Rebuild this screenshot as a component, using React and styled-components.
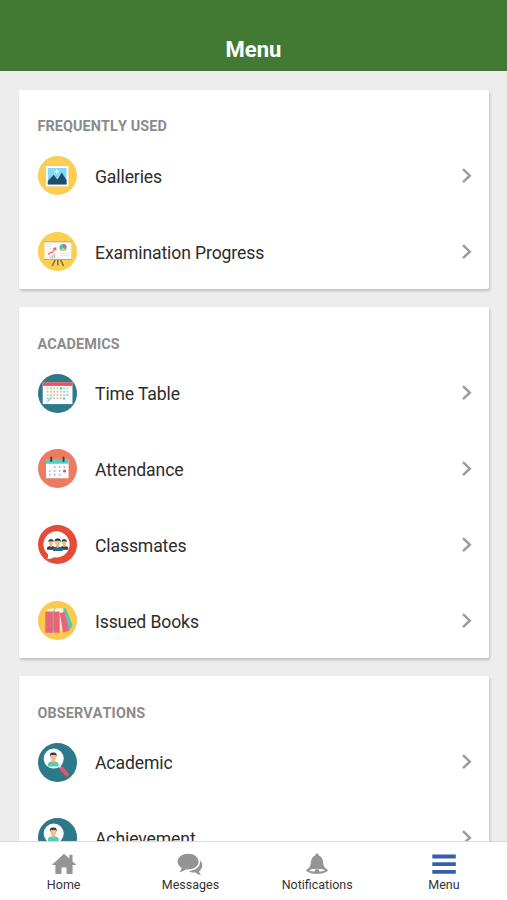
import React from "react";
import styled, { createGlobalStyle } from "styled-components";

const GlobalStyle = createGlobalStyle`
  * { box-sizing: border-box; }
  body { margin: 0; background: #ededed; font-family: Roboto, "Liberation Sans", sans-serif; }
`;

const Screen = styled.div`
  display: flex;
  flex-direction: column;
  height: 900px;
  overflow: hidden;
  background: #ededed;
`;

const Header = styled.header`
  flex: none;
  height: 71.4px;
  padding-top: 37px;
  background: #427a34;
  color: #fff;
  font-size: 22px;
  line-height: 26px;
  font-weight: 700;
  text-align: center;
`;

const Content = styled.main`
  flex: 1;
  min-height: 0;
  overflow: hidden;
  display: flex;
  flex-direction: column;
  gap: 17.8px;
  padding: 18.5px 18.5px 0 19px;
`;

const Card = styled.section`
  flex: none;
  background: #fff;
  border-radius: 2px;
  box-shadow: 1px 2px 3px rgba(0, 0, 0, 0.2);
`;

const CardTitle = styled.h2`
  margin: 0;
  height: 48px;
  padding: 28.6px 18.5px 0;
  font-size: 14.4px;
  line-height: 17px;
  font-weight: 700;
  font-kerning: none;
  letter-spacing: 0.1px;
  color: #8b8b8b;
`;

const Row = styled.div`
  display: flex;
  align-items: center;
  height: 75.8px;
  padding: 0 15px 0 18.5px;
`;

const RowIcon = styled.svg`
  flex: none;
  width: 39px;
  height: 39px;
  margin-right: 18.5px;
`;

const RowLabel = styled.span`
  flex: 1;
  padding-top: 2px;
  font-size: 17.6px;
  letter-spacing: -0.12px;
  line-height: 22px;
  color: #2c2c2c;
`;

const Arrow = styled.svg`
  width: 14px;
  height: 18px;
  fill: none;
  stroke: #9c9c9c;
  stroke-width: 2.5;
`;

const TabBar = styled.nav`
  flex: none;
  display: grid;
  grid-template-columns: repeat(4, 1fr);
  height: 59px;
  border-top: 1px solid #d9d9d9;
  background: #fff;
`;

const Tab = styled.div`
  display: flex;
  flex-direction: column;
  align-items: center;
  padding: 10px 0 0 0.6px;
  font-size: 12.5px;
  line-height: 16px;
  color: #333;
`;

const TabIcon = styled.svg`
  width: 28px;
  height: 24px;
  margin-bottom: 1px;
  fill: ${(p) => (p.$active ? "#3460ab" : "#949494")};
`;

const Person = ({ x, y, s = 1, shirt = "#26435b", hair = "#24313b" }) => (
  <g transform={`translate(${x} ${y}) scale(${s})`}>
    <path d="M-4.8 8.5V6.3Q-4.5 3.8 0 3.8T4.8 6.3V8.5Z" fill={shirt} />
    <path d="M-1.4 1.5h2.8v3L0 5.5-1.4 4.5Z" fill="#efad78" />
    <ellipse cx="0" cy="0" rx="2.6" ry="3.3" fill="#f7bf87" />
    <path d="M-2.9-.3Q-3.8-4.4 0-4.2 3.8-4.4 2.9-.3L2.1-1.9H-2.1Z" fill={hair} />
  </g>
);

const Galleries = () => (
  <>
    <circle cx="19.5" cy="19.5" r="19.5" fill="#fbcd55" />
    <path d="M8 10h22.4v20.4H8Z" fill="#fff" />
    <path d="M9.8 11.9h18.8v16.5H9.8Z" fill="#83d9f8" />
    <path d="M9.8 28.4v-3.3l6-6.3 2.8 4 1.2.4 4-6.6 4.8 7.7v4.1Z" fill="#244b6b" />
    <path d="M18.7 13.3v4.4M16.5 15.5h4.4" stroke="#e7fbff" strokeWidth="1.3" />
  </>
);

const Examination = () => (
  <>
    <circle cx="19.5" cy="19.5" r="19.5" fill="#fcd04e" />
    <path d="M17.3 27.5l-3.1 6.5M19.8 27.5v5.8M22.5 27.5l3 6.5" stroke="#80704b" strokeWidth="1.6" />
    <path d="M6.5 9.8h26.7v17.7H6.5Z" fill="#f8f9fb" />
    <path d="M5.8 9.8h28M5.8 27.5h28" stroke="#a79c78" strokeWidth=".8" />
    <path d="M10 22.5l2.8-2 1.3.2 3.4-4.6m-2.3.5 2.5-.7.2 2.5" fill="none" stroke="#e66c70" strokeWidth="1.2" />
    <path d="M12.2 26.3v-1.8M16.4 26.3v-5" stroke="#f0b4a7" strokeWidth="1.5" />
    <path d="M14.3 26.3v-3.3" stroke="#8ed6c5" strokeWidth="1.5" />
    <circle cx="25" cy="15.5" r="3.5" fill="#4ebfb1" />
    <path d="M25 15.5V12a3.5 3.5 0 0 1 3.5 3.5Z" fill="#e85e63" />
    <path d="M25 15.5l2.4 2.5a3.5 3.5 0 0 1-4.6.2Z" fill="#f0ce62" />
    <path d="M9 12.5h5M9 14.5h3M22.5 21.5h7.5M22.5 23.5h7.5" stroke="#dadde1" strokeWidth=".6" />
  </>
);

const CALENDAR_COLORS = ["#edc46f", "#b9c8d0", "#dcc3c3", "#b3c4cd", "#74d1c4", "#c0c0d0", "#ecc25f", "#9dd2c6"];

const TimeTable = () => (
  <>
    <circle cx="19.5" cy="19.5" r="19.5" fill="#2d7889" />
    <path d="M4.7 8.3h29.8v21.8H4.7Z" fill="#fafcfb" />
    <path d="M4.7 8.3h29.8v3.6H4.7Z" fill="#e85261" />
    {Array.from({ length: 26 }, (_, i) => (
      <path
        key={i}
        d={`M${8.7 + (i % 7) * 3.3} ${13.5 + Math.floor(i / 7) * 3.3}h1.8v1.8h-1.8Z`}
        fill={CALENDAR_COLORS[(i * 3) % 8]}
      />
    ))}
    <path d="M8.7 27.5l4-5 1.2 1-3.5 4.5Z" fill="#afcfc3" />
    <path d="M21.9 13.4h2.2v2.2h-2.2ZM25 23.4h2.2v2.2H25Z" fill="#52c6b8" />
  </>
);

const Attendance = () => (
  <>
    <circle cx="19.5" cy="19.5" r="19.5" fill="#ec7b61" />
    <path d="M8 11Q8 10 9 10H29.6Q30.6 10 30.6 11V29.3H8Z" fill="#fafcff" />
    <path d="M8 14.8V11Q8 10 9 10H29.6Q30.6 10 30.6 11V14.8Z" fill="#57cebb" />
    <path d="M13.2 8.5v3.5M25.5 8.5v3.5" stroke="#414858" strokeWidth="2" strokeLinecap="round" />
    {Array.from({ length: 10 }, (_, n) => {
      const i = n + 1;
      return (
        <circle key={i} cx={11.8 + (i % 4) * 4.9} cy={18 + Math.floor(i / 4) * 3.9} r="1" fill="#b7b9c6" />
      );
    })}
    <circle cx="26.5" cy="21.9" r="1.5" fill="#e64f48" />
  </>
);

const Classmates = () => (
  <>
    <circle cx="19.5" cy="19.5" r="19.5" fill="#e64b38" />
    <path d="M9.2 34Q10.6 32 9.9 29.2A13.1 13.1 0 1 1 16.5 32.3Q13.5 34.2 9.2 34Z" fill="#fff" />
    <Person x={13} y={17.8} s={0.82} />
    <Person x={26.2} y={17.8} s={0.82} />
    <Person x={19.7} y={17.6} s={1} shirt="#246b8f" />
  </>
);

const Books = () => (
  <>
    <circle cx="19.5" cy="19.5" r="19.5" fill="#fbc94b" />
    <path d="M10.5 7.7h6.7l-2.7 3.1H7.3Z" fill="#f6f2e9" />
    <path d="M17.2 8v20.5l-3 3.3V11Z" fill="#53c9bc" />
    <path d="M7.3 10.5h7.4v21.3H7.3Z" fill="#e96577" />
    <path d="M18.3 7.2h6.1l-2 4.1h-6.9Z" fill="#faf8ec" />
    <path d="M21.2 10.7l3.2-3.5 3.2 18-5 5.5Z" fill="#faf8ec" />
    <path d="M15.8 10.5h5.8v21.3h-5.8Z" fill="#e96577" />
    <path d="M25.5 7.5l2.2-.4 6.9 17.5-3.9 5.4Z" fill="#54c8bd" />
    <path d="M21.7 12l4.9-1.1 4.7 18.9-6.4 1.6Z" fill="#e96577" />
    <path d="M7.6 14.5h6.7M7.6 28.4h6.7M16.1 14.5h5.1M16.1 28.4h5.1" stroke="#df6674" strokeWidth=".6" />
  </>
);

const Academic = () => (
  <>
    <circle cx="19.5" cy="19.5" r="19.5" fill="#2d7889" />
    <path d="M21.5 23.5l2 2" stroke="#d8e5e9" strokeWidth="2" />
    <path d="M23.7 25.7l5.2 5.7" stroke="#ea5363" strokeWidth="4" strokeLinecap="round" />
    <circle cx="15.7" cy="15.6" r="10" fill="#fff" />
    <Person x={15.3} y={14.1} s={1.12} shirt="#51cbb9" hair="#473b36" />
  </>
);

const SECTIONS = [
  ["FREQUENTLY USED", [["Galleries", Galleries], ["Examination Progress", Examination]]],
  ["ACADEMICS", [["Time Table", TimeTable], ["Attendance", Attendance], ["Classmates", Classmates], ["Issued Books", Books]]],
  ["OBSERVATIONS", [["Academic", Academic], ["Achievement", Academic]]],
];

const TABS = [
  ["Home", <path d="M14 1.7 1.8 13.1h3.6V22h6.1v-6.5h5V22h6.1v-8.9h3.8L22.5 9.5V2.7h-3.2v3.9Z" />],
  ["Messages", (
    <>
      <path d="M12.2 1.7C6.2 1.7 1.6 5 1.6 9.6c0 2.7 1.6 5 4 6.3-.3 1.7-1.2 3-2.4 3.8 2.6 0 4.7-.9 6.4-2.3 7.4.9 13-2.7 13-7.8 0-4.6-4.6-7.9-10.4-7.9Z" />
      <path d="M24.2 8.3c3.3 3.7 2.5 8.8-1.2 11 .2 1.5 1 2.7 2.3 3.5-2.4.1-4.4-.8-5.6-2.4-2.8.3-5.2-.2-7-1.5 6.7 0 12.2-4 11.5-10.6Z" />
    </>
  )],
  ["Notifications", (
    <>
      <path d="M14 1.4c1 0 1.5.8 1.6 1.8 3 1.3 4.4 4.3 4.7 8 .3 3.3 1.6 5 4.2 6.3v1.7H3.5v-1.7c2.6-1.3 3.9-3 4.2-6.3.3-3.7 1.7-6.7 4.7-8 .1-1 .6-1.8 1.6-1.8Z" />
      <path d="M3.5 18.4C6 22.9 22 22.9 24.5 18.4l-2.3-.7H5.8Z" />
      <ellipse cx="14" cy="18.2" rx="7.7" ry="1.5" fill="#fff" />
      <circle cx="14" cy="19.4" r="2.4" />
    </>
  )],
  ["Menu", <path d="M2.3 2.6h23.5v3.8H2.3ZM2.3 10.2h23.5V14H2.3ZM2.3 18h23.5v3.8H2.3Z" />],
];

export default function App() {
  return (
    <>
      <GlobalStyle />
      <Screen>
        <Header>Menu</Header>
        <Content>
          {SECTIONS.map(([title, items]) => (
            <Card key={title}>
              <CardTitle>{title}</CardTitle>
              {items.map(([label, Icon]) => (
                <Row key={label}>
                  <RowIcon viewBox="0 0 39 39"><Icon /></RowIcon>
                  <RowLabel>{label}</RowLabel>
                  <Arrow viewBox="0 0 14 18"><path d="M3 2.2 9.8 8.7 3 15.2" /></Arrow>
                </Row>
              ))}
            </Card>
          ))}
        </Content>
        <TabBar>
          {TABS.map(([label, drawing]) => (
            <Tab key={label}>
              <TabIcon viewBox="0 0 28 24" $active={label === "Menu"}>{drawing}</TabIcon>
              {label}
            </Tab>
          ))}
        </TabBar>
      </Screen>
    </>
  );
}
